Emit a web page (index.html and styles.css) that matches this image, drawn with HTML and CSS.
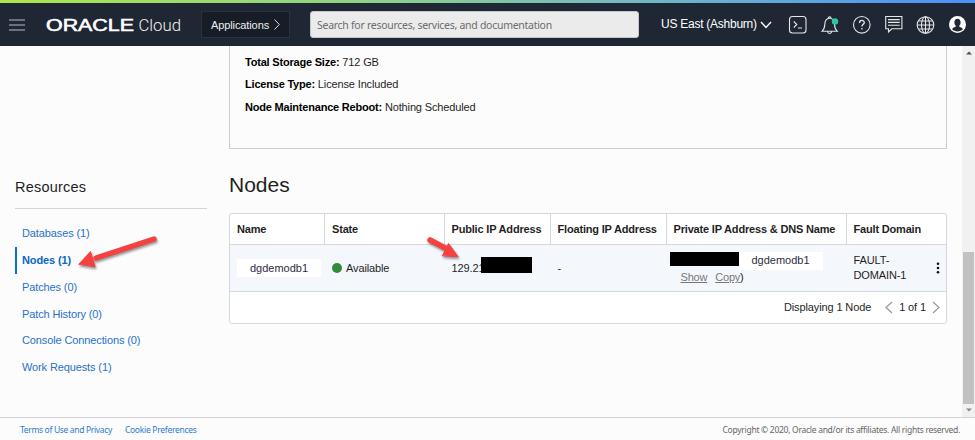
FILE: index.html
```html
<!DOCTYPE html>
<html lang="en">
<head>
<meta charset="utf-8">
<title>Oracle Cloud - Nodes</title>
<link rel="stylesheet" href="styles.css">
</head>
<body>
<header class="topbar">
  <svg class="menu" width="16" height="12" viewBox="0 0 16 12"><path d="M0 1h16M0 6h16M0 11h16"/></svg>
  <svg class="logo" width="138" height="20" viewBox="0 0 138 20" role="img" aria-label="Oracle Cloud">
    <text class="logo-brand" x="0" y="15.8" textLength="88" lengthAdjust="spacingAndGlyphs">ORACLE</text>
    <text class="logo-product" x="92.500" y="16" textLength="42.500" lengthAdjust="spacingAndGlyphs">Cloud</text>
  </svg>
  <button class="apps">Applications <svg width="6" height="11" viewBox="0 0 6 11"><path d="M.5 .5L5.3 5.500L.5 10.500"/></svg></button>
  <div class="search">Search for resources, services, and documentation</div>
  <div class="region">US East (Ashburn) <svg width="12" height="8" viewBox="0 0 12 8"><path d="M1 1l5 5.500L11 1"/></svg></div>
  <nav class="tools">
    <svg width="20" height="20" viewBox="0 0 20 20"><rect x="1.500" y="1.500" width="16.500" height="16.500" rx="3"/><path d="M5.800 6.500l3 3-3 3M10 13h4"/></svg>
    <svg width="20" height="20" viewBox="0 0 20 20"><path d="M2 16.300c1.500-1.300 2.700-3 2.800-7C5 5.500 7 3.500 9.500 3.300s5 2 5 6c.1 4 1.300 5.700 2.800 7zM8.300 3.300c0-2 2.700-2 2.700 0M7.500 16.500c.4 2.600 3.900 2.600 4.300 0"/><circle class="dot" cx="15" cy="6.500" r="3.200"/></svg>
    <svg width="20" height="20" viewBox="0 0 20 20"><circle cx="9.800" cy="9.800" r="8.300"/><path class="thick" d="M7.500 8c0-3.500 4.800-3.200 4.800-.5 0 1.800-2.400 1.800-2.400 4.100M9.900 13v1.500"/></svg>
    <svg width="20" height="20" viewBox="0 0 20 20"><path d="M1.700 1.500h16.200v12.300H7.800L4.500 17v-3.200H1.700zM4 4.600h11.700M4 7.400h11.700M4 10.200h11.700"/></svg>
    <svg width="20" height="20" viewBox="0 0 20 20"><circle cx="9.500" cy="10" r="8.300"/><ellipse cx="9.500" cy="10" rx="4" ry="8.300"/><path d="M9.500 1.700v16.600M1.200 10h16.600M2.500 6h14M2.500 14h14"/></svg>
    <svg width="20" height="20" viewBox="0 0 20 20"><circle class="avatar" cx="9.500" cy="9.500" r="8.500"/><path class="person" d="M9.500 3.700c2 0 3.100 1.500 3.100 3.600 0 1.800-.6 3-1.500 3.700.1 1.300 2.800 1 3.800 3.300-2.800 2.800-8 2.800-10.800 0 1-2.300 3.700-2 3.800-3.300-.9-.7-1.500-1.900-1.500-3.700 0-2.100 1.100-3.600 3.100-3.600z"/></svg>
  </nav>
</header>

<div class="viewport">
  <aside class="sidebar">
    <h2>Resources</h2>
    <a>Databases (1)</a>
    <a class="active">Nodes (1)</a>
    <a>Patches (0)</a>
    <a>Patch History (0)</a>
    <a>Console Connections (0)</a>
    <a>Work Requests (1)</a>
  </aside>
  <main>
    <section class="details">
      <p><b>Total Storage Size:</b> 712 GB</p>
      <p><b>License Type:</b> License Included</p>
      <p><b>Node Maintenance Reboot:</b> Nothing Scheduled</p>
    </section>
    <h1>Nodes</h1>
    <section class="table">
      <div class="row head">
        <div>Name</div><div>State</div><div>Public IP Address</div><div>Floating IP Address</div><div>Private IP Address &amp; DNS Name</div><div>Fault Domain</div>
      </div>
      <div class="row body">
        <div><span class="hostname">dgdemodb1</span></div>
        <div><i class="status"></i>Available</div>
        <div class="public">129.21<i class="mask"></i></div>
        <div>-</div>
        <div class="private">
          <div class="dns"><i class="mask"></i><span class="hostname">dgdemodb1</span></div>
          <div class="actions"><a>Show</a><a>Copy</a>)</div>
        </div>
        <div class="fault"><span>FAULT-<br>DOMAIN-1</span><svg width="4" height="12" viewBox="0 0 4 12"><circle cx="2" cy="1.700" r="1.300"/><circle cx="2" cy="6" r="1.300"/><circle cx="2" cy="10.300" r="1.300"/></svg></div>
      </div>
      <div class="pager">
        <span class="count">Displaying 1 Node</span>
        <svg width="8" height="13" viewBox="0 0 8 13"><path d="M7 1L1 6.500L7 12"/></svg>
        <span class="page">1 of 1</span>
        <svg width="8" height="13" viewBox="0 0 8 13"><path d="M1 1L7 6.500L1 12"/></svg>
      </div>
    </section>
  </main>
  <div class="scrollbar">
    <svg width="6" height="4" viewBox="0 0 6 4"><path d="M0 3.500L3 .5L6 3.500z"/></svg>
    <div class="thumb"></div>
    <svg class="down" width="6" height="4" viewBox="0 0 6 4"><path d="M0 .5L3 3.500L6 .5z"/></svg>
  </div>
</div>

<footer>
  <a>Terms of Use and Privacy</a><a>Cookie Preferences</a>
  <span>Copyright © 2020, Oracle and/or its affiliates. All rights reserved.</span>
</footer>

<svg class="arrow arrow-nav" width="90" height="44" viewBox="0 0 90 44"><path d="M78 5L20 24" /><path class="tip" d="M3 30L14.500 17.500L19 32.500z"/></svg>
<svg class="arrow arrow-ip" width="40" height="30" viewBox="0 0 40 30"><path d="M5 6L24 16"/><path class="tip" d="M33 22.500L23.500 9.500L17.500 21.500z"/></svg>
</body>
</html>
```

FILE: styles.css
```css
* { box-sizing: border-box; }
body {
  margin: 0; width: 975px; height: 440px; overflow: hidden; position: relative;
  display: flex; flex-direction: column;
  background: #fcfcfc; color: #1f1f1f;
  font: 11px/15px "Liberation Sans", Arial, sans-serif; letter-spacing: -.12px;
}
i { font-style: normal; }
h1, h2, p { margin: 0; font-weight: normal; letter-spacing: 0; }

.topbar {
  height: 46px; flex: none; display: flex; align-items: center;
  padding: 3px 7px 0 9px;
  background: linear-gradient(90deg, #aee64c, #8fd482 35%, #72b9c4 65%, #4a91fb) 0 0 / 100% 3px no-repeat #1e2733;
}
.menu { stroke: #b9bdc1; fill: none; margin-right: 21px; }
.logo { fill: #fff; overflow: visible; flex: none; letter-spacing: 0; }
.logo-brand { font: 16.500px "Liberation Sans", Arial, sans-serif; stroke: #fff; stroke-width: .6; }
.logo-product { font: 300 17px Roboto, "Liberation Sans", sans-serif; fill: #f0f1f2; }
.apps {
  width: 89px; height: 27px; margin: 0 0 0 17px; padding: 0;
  display: flex; align-items: center; justify-content: center; gap: 5px;
  background: #161d26; border: 1px solid #29323d; color: #eee;
  font: 11px "Liberation Sans", Arial, sans-serif; letter-spacing: -.1px;
}
.apps svg { fill: none; stroke: #ddd; }
.search {
  width: 329px; height: 27px; margin-left: 20px; padding-left: 6px;
  background: #ebebeb; border: 1px solid #c4c8cc; border-radius: 3px; color: #6b6b6b;
  font: 10.500px/27px "Noto Sans", sans-serif; letter-spacing: -.28px;
}
.region {
  margin-left: 22px; width: 111px; display: flex; align-items: center; justify-content: space-between;
  color: #fff; font-size: 12px; white-space: nowrap; letter-spacing: -.25px;
}
.region svg { fill: none; stroke: #fff; stroke-width: 1.400; }
.tools { display: flex; gap: 12px; margin-left: 16px; }
.tools svg { fill: none; stroke: #e4e6e8; stroke-width: 1.100; }
.tools .thick { stroke-width: 1.300; }
.tools .dot { fill: #2dc5a2; stroke: none; }
.tools .avatar { fill: #fff; stroke: none; }
.tools .person { fill: #1e2733; stroke: none; }

.viewport { flex: 1; min-height: 0; display: flex; }
.sidebar { width: 192px; margin-left: 15px; padding-top: 132px; }
.sidebar h2 { font-size: 14.500px; letter-spacing: .2px; line-height: 19px; height: 31px; margin-bottom: 11px; border-bottom: 1px solid #d2d4da; }
.sidebar a { display: block; height: 26.850px; line-height: 26.850px; padding-left: 7px; color: #2672c8; }
.sidebar .active { color: #0b67c2; font-weight: bold; border-left: 2px solid #0b6fcb; padding-left: 5px; }
main { width: 718px; margin-left: 22px; }
.details { height: 103px; padding: 5px 15px; border: 1px solid #ccc; border-top: 0; }
.details p { line-height: 22.300px; letter-spacing: -.14px; }
.details b { color: #000; letter-spacing: -.2px; }
h1 { font-size: 21px; line-height: 24px; margin: 24px 0 16px; }

.table { height: 111px; border: 1px solid #d4d9dd; border-radius: 3px; background: #fff; overflow: hidden; }
.row { display: grid; grid-template-columns: 94px 119.500px 106px 116px 180px 1fr; }
.row > div { padding-left: 7px; display: flex; align-items: center; white-space: nowrap; }
.head { height: 30px; font-weight: bold; letter-spacing: -.18px; }
.head > div + div { border-left: 1px solid #d4d9dd; }
.body { height: 48px; background: #f4f8fd; border: solid #d4d9dd; border-width: 1px 0; }
.body > div + div { padding-left: 8px; }
.hostname { background: #fff; height: 18px; line-height: 18px; width: 84px; text-align: center; color: #2d2c42; letter-spacing: 0; }
.status { width: 10px; height: 10px; border-radius: 50%; background: #338a3a; margin-right: 4px; }
.mask { background: #000; }
.public .mask { width: 51px; height: 16px; margin: -6px 0 0 -3px; }
.row > .private { display: block; padding: 7px 0 0 4px; }
.dns { display: flex; height: 17px; }
.dns .mask { width: 69px; height: 14px; }
.dns .hostname { line-height: 17px; }
.actions { padding-left: 11px; line-height: 16px; letter-spacing: -.2px; }
.actions a { color: #777; text-decoration: underline; }
.actions a + a { margin-left: 8px; }
.fault svg { margin-left: auto; margin-right: 6px; fill: #111; }
.pager { height: 31px; display: flex; align-items: center; padding-right: 6px; justify-content: flex-end; }
.pager svg { fill: none; stroke: #999; stroke-width: 1.200; }
.count { margin-right: 14px; }
.page { margin: 0 6px; }

.scrollbar { width: 13px; margin-left: auto; background: #f1f1f1; display: flex; flex-direction: column; align-items: center; padding: 5px 0; fill: #505050; }
.thumb { width: 11px; height: 152px; margin-top: auto; background: #c1c1c1; }
.down { margin-top: 4px; fill: #888; }

footer {
  height: 23px; flex: none; border-top: 1px solid #d3d3d3; padding: 1px 15px 0 20px;
  display: flex; align-items: center; gap: 13px;
  font: 8.500px "Noto Sans", sans-serif; letter-spacing: -.28px; color: #666;
}
footer a { color: #2b7bd0; }
footer a:first-child { letter-spacing: -.34px; }
footer span { margin-left: auto; }

.arrow { position: absolute; fill: none; stroke: #f5413f; stroke-width: 5.500; stroke-linecap: round; filter: drop-shadow(1px 2px 1px rgba(0,0,0,.4)); }
.arrow .tip { fill: #f5413f; stroke-width: 1; }
.arrow-nav { left: 76px; top: 234px; }
.arrow-ip { left: 425px; top: 234px; }
```
